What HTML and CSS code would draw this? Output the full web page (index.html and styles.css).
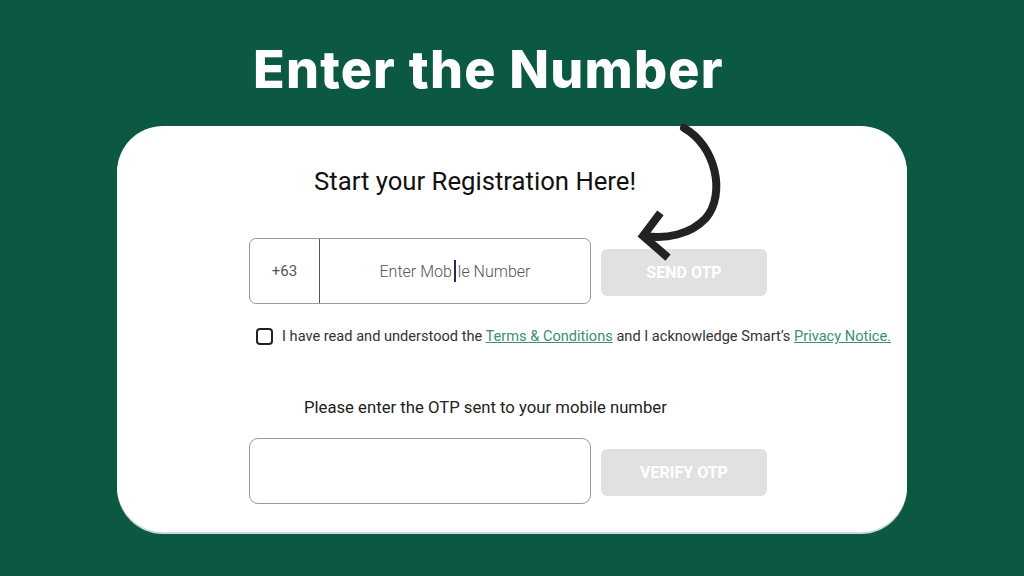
FILE: index.html
```html
<!DOCTYPE html>
<html>
<head>
<meta charset="utf-8">
<link rel="stylesheet" href="styles.css">
</head>
<body>
<div class="page">
  <h1 class="headline">Enter the Number</h1>
  <div class="card">
    <h2 class="subtitle">Start your Registration Here!</h2>
    <div class="row row-phone">
      <div class="field phone">
        <div class="prefix">+63</div>
        <div class="placeholder">Enter Mob<span class="caret"></span>le Number</div>
      </div>
      <button class="btn">SEND OTP</button>
    </div>
    <div class="consent">
      <span class="checkbox"></span>
      <span class="consent-text">I have read and understood the <a class="link">Terms &amp; Conditions</a> and I acknowledge Smart’s <a class="link">Privacy Notice.</a></span>
    </div>
    <p class="otp-label">Please enter the OTP sent to your mobile number</p>
    <div class="row row-otp">
      <div class="field otp"></div>
      <button class="btn">VERIFY OTP</button>
    </div>
  </div>
  <svg class="arrow" width="1024" height="576" viewBox="0 0 1024 576">
    <path d="M684 128 C716 146 726 194 706 218 C690 235 666 239 645 236" fill="none" stroke="#222" stroke-width="8" stroke-linecap="round"/>
    <path d="M658 216 L643 236 L665 255" fill="none" stroke="#222" stroke-width="8" stroke-linecap="square" stroke-linejoin="miter"/>
  </svg>
</div>
</body>
</html>
```

FILE: styles.css
```css
* { box-sizing: border-box; }
html, body { margin: 0; padding: 0; }
body {
  background: #0b5943;
  width: 1024px;
  height: 576px;
  overflow: hidden;
  font-family: Roboto, "Liberation Sans", sans-serif;
}
.page {
  position: relative;
  width: 1024px;
  height: 576px;
  padding-top: 36px;
}
.headline {
  margin: 0 0 0 253px;
  font-family: Inter, "Open Sans", sans-serif;
  font-weight: 800;
  font-size: 52px;
  line-height: 68px;
  color: #fff;
  letter-spacing: 1.2px;
}
.card {
  margin: 22px 0 0 117px;
  width: 790px;
  height: 406px;
  background: #fff;
  border-radius: 46px;
  padding: 38px 0 0 132px;
  box-shadow: 0 2px 0 #d6d6d6;
}
.subtitle {
  margin: 0 0 0 65px;
  font-weight: 400;
  font-size: 25.7px;
  line-height: 34px;
  color: #111;
}
.row {
  display: flex;
  align-items: center;
  gap: 10px;
}
.row-phone { margin-top: 40px; }
.field {
  width: 342px;
  height: 66px;
  border: 1px solid #9a9a9a;
  border-radius: 7px;
  background: #fff;
}
.phone { display: flex; }
.prefix {
  width: 70px;
  border-right: 1px solid #555;
  display: flex;
  align-items: center;
  justify-content: center;
  font-size: 15px;
  color: #555;
}
.placeholder {
  flex: 1;
  display: flex;
  align-items: center;
  justify-content: center;
  font-size: 16px;
  color: #555;
  font-weight: 300;
}
.caret {
  display: inline-block;
  width: 2px;
  height: 22px;
  background: #2a2a55;
  margin: 0 2px;
}
.btn {
  width: 166px;
  height: 47px;
  border: none;
  border-radius: 6px;
  background: #e1e1e1;
  color: #fff;
  font-family: Roboto, "Liberation Sans", sans-serif;
  font-weight: 700;
  font-size: 16px;
  margin-top: 2px;
}
.consent {
  display: flex;
  align-items: center;
  gap: 9px;
  margin: 23px 0 0 7px;
  font-size: 14.6px;
  color: #333;
}
.checkbox {
  width: 17px;
  height: 17px;
  flex: none;
  border: 2px solid #222;
  border-radius: 4px;
}
.consent-text { white-space: nowrap; }
.link {
  color: #3a9074;
  text-decoration: underline;
}
.otp-label {
  margin: 52px 0 0 55px;
  font-size: 16.7px;
  line-height: 22px;
  color: #222;
}
.row-otp { margin-top: 19px; }
.otp { border-radius: 9px; }
.arrow {
  position: absolute;
  left: 0;
  top: 0;
  pointer-events: none;
}
```
